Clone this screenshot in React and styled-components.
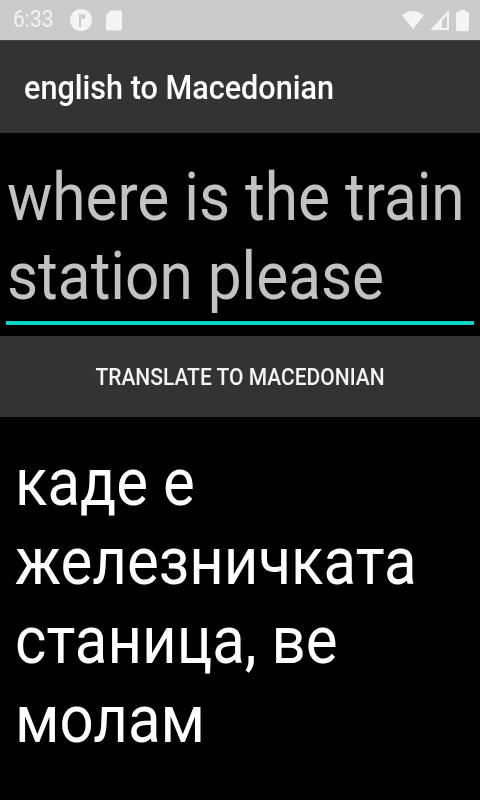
import React from "react";
import styled, { createGlobalStyle } from "styled-components";

const Global = createGlobalStyle`
  html, body { margin: 0; padding: 0; background: #000; }
  body { font-family: Roboto, "Noto Sans", sans-serif; }
`;
const Screen = styled.div`
  width: 480px; height: 800px; background: #000; display: flex; flex-direction: column; overflow: hidden;
  filter: blur(0.45px);
`;
const Line = styled.span`
  display: block; white-space: nowrap; transform: scaleY(1.1); transform-origin: left 75%;
`;
const StatusBar = styled.div`
  height: 40px; background: #cbcbcb; display: flex; align-items: center; justify-content: space-between;
  padding: 0 11px 0 13px; box-sizing: border-box; color: #f2f2f2; font-size: 21px; flex: none;
`;
const Group = styled.div`
  display: flex; align-items: center; gap: ${p => p.$gap}px;
`;
const Clock = styled.span`
  margin-right: 3px;
`;
const AppBar = styled.div`
  height: 93px; background: #333; color: #fff; font-size: 30.6px; font-weight: 500; display: flex; align-items: center;
  padding: 3px 24px 0; box-sizing: border-box; flex: none; border-top: 1px solid #444;
`;
const Input = styled.div`
  margin: 25px 6px 0; padding: 2px 1px 0; height: 167px; box-sizing: border-box; font-size: 60.3px; line-height: 79px;
  color: #c2c2c2; border-bottom: 4px solid #00d6c8; flex: none;
`;
const Button = styled.div`
  margin-top: 11px; height: 81px; padding-top: 2px; box-sizing: border-box; background: #333; color: #f4f4f4;
  font-size: 21px; font-weight: 500; flex: none;
  display: flex; align-items: center; justify-content: center;
`;
const Result = styled.div`
  padding: 28px 15px 0; color: #fff; font-size: 60px; line-height: 79px;
`;
const Icon = styled.svg`
  display: block; fill: #f4f4f4;
`;

export default function App() {
  return (
    <Screen>
      <Global />
      <StatusBar>
        <Group $gap={13}>
          <Clock><Line>6:33</Line></Clock>
          <Icon width="22" height="22" viewBox="0 0 22 22">
            <path fillRule="evenodd" d="M11 0a11 11 0 1 0 0 22a11 11 0 0 0 0-22zM9 5h2v13H9zM13 5a2.5 2.5 0 1 1 0 5a2.5 2.5 0 0 1 0-5z" />
          </Icon>
          <Icon width="17" height="22" viewBox="0 0 18 22">
            <path d="M6 1h10a2 2 0 0 1 2 2v17a2 2 0 0 1-2 2H3a2 2 0 0 1-2-2V6z" />
          </Icon>
        </Group>
        <Group $gap={6}>
          <Icon width="22" height="18" viewBox="0 0 22 18">
            <path d="M11 18L0 4.5C3 1.8 7 0 11 0s8 1.8 11 4.5z" />
          </Icon>
          <Icon width="20" height="20" viewBox="0 0 20 20">
            <path fillRule="evenodd" d="M19 0v20H0zM17 5l-5 6v7h5z" />
          </Icon>
          <Icon width="13" height="23" viewBox="0 0 14 23">
            <path d="M4 0h6v2h2a2 2 0 0 1 2 2v17a2 2 0 0 1-2 2H2a2 2 0 0 1-2-2V4a2 2 0 0 1 2-2h2z" />
          </Icon>
        </Group>
      </StatusBar>
      <AppBar><Line>english to Macedonian</Line></AppBar>
      <Input>
        <Line>where is the train</Line>
        <Line>station please</Line>
      </Input>
      <Button><Line>TRANSLATE TO MACEDONIAN</Line></Button>
      <Result>
        <Line>каде е</Line>
        <Line>железничката</Line>
        <Line>станица, ве</Line>
        <Line>молам</Line>
      </Result>
    </Screen>
  );
}
